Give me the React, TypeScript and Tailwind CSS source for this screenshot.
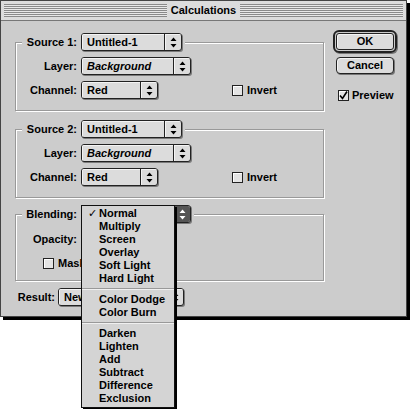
import React from "react";

function Arrows({ light }: { light?: boolean }) {
  return (
    <svg width="7" height="11" viewBox="0 0 7 11">
      <path d="M3.5 0.5 L6.5 4 H0.5 Z M0.5 7 H6.5 L3.5 10.5 Z" fill={light ? "#fff" : "#000"} />
    </svg>
  );
}

function Select({ value, className, italic, pressed }: { value: string; className: string; italic?: boolean; pressed?: boolean }) {
  return (
    <div className={`flex h-[18px] shrink-0 rounded-[3px] border border-[#222] bg-[#dcdcdc] shadow-[1px_1px_0_#7a7a7a] overflow-hidden ${className}`}>
      <div className={`flex-1 pl-[5px] leading-[16px] whitespace-nowrap overflow-hidden shadow-[inset_1px_1px_0_#f4f4f4] ${italic ? "italic" : ""}`}>
        {value}
      </div>
      <div className={`w-[17px] flex items-center justify-center border-l border-[#222] ${pressed ? "bg-[#555]" : "shadow-[inset_1px_1px_0_#f4f4f4]"}`}>
        <Arrows light={pressed} />
      </div>
    </div>
  );
}

function Checkbox({ checked }: { checked?: boolean }) {
  return (
    <div className="w-[11px] h-[11px] shrink-0 border border-[#222] bg-[#e4e4e4] shadow-[inset_1px_1px_0_#fff] flex items-center justify-center">
      {checked && (
        <svg width="9" height="9" viewBox="0 0 9 9">
          <path d="M1 4.5 L3.5 7.5 L8 0.5" stroke="#000" strokeWidth="1.6" fill="none" />
        </svg>
      )}
    </div>
  );
}

function Stripes() {
  return <div className="flex-1 h-[13px] bg-[image:repeating-linear-gradient(to_bottom,#8a8a8a_0px,#8a8a8a_1px,#e8e8e8_1px,#e8e8e8_2px)]" />;
}

const blendModes = [
  ["Normal", "Multiply", "Screen", "Overlay", "Soft Light", "Hard Light"],
  ["Color Dodge", "Color Burn"],
  ["Darken", "Lighten", "Add", "Subtract", "Difference", "Exclusion"],
];

export default function App() {
  return (
    <div className="relative w-[410px] h-[409px] bg-white font-['Liberation_Sans',Arial,sans-serif] text-[11px] font-bold text-black">
      <div className="w-[407px] h-[317px] border border-[#444] shadow-[3px_3px_0_#000] bg-[#cccccc] flex flex-col">
        {/* title bar */}
        <div className="flex items-center h-[20px] px-[3px] border-b border-[#777] bg-[#dcdcdc]">
          <Stripes />
          <div className="px-[4px] text-[11px] leading-none">Calculations</div>
          <Stripes />
        </div>

        <div className="flex pl-[14px]">
          {/* left column */}
          <div className="w-[309px] flex flex-col">
            {/* Source 1 */}
            <div className="mt-[21px] border border-[#999] shadow-[inset_1px_1px_0_#fff,1px_1px_0_#fff] pb-[11px] flex flex-col">
              <div className="-mt-[10px] ml-[6px] self-start flex items-center bg-[#cccccc] pr-[3px]">
                <div className="w-[55px] text-right">Source 1:</div>
                <Select value="Untitled-1" className="ml-[4px] w-[101px]" />
              </div>
              <div className="mt-[6px] flex items-center">
                <div className="w-[61px] text-right">Layer:</div>
                <Select value="Background" italic className="ml-[4px] w-[110px]" />
              </div>
              <div className="mt-[6px] flex items-center">
                <div className="w-[61px] text-right">Channel:</div>
                <Select value="Red" className="ml-[4px] w-[77px]" />
                <div className="ml-[74px] flex items-center gap-[4px]">
                  <Checkbox />
                  <span>Invert</span>
                </div>
              </div>
            </div>

            {/* Source 2 */}
            <div className="mt-[18px] border border-[#999] shadow-[inset_1px_1px_0_#fff,1px_1px_0_#fff] pb-[11px] flex flex-col">
              <div className="-mt-[10px] ml-[6px] self-start flex items-center bg-[#cccccc] pr-[3px]">
                <div className="w-[55px] text-right">Source 2:</div>
                <Select value="Untitled-1" className="ml-[4px] w-[101px]" />
              </div>
              <div className="mt-[6px] flex items-center">
                <div className="w-[61px] text-right">Layer:</div>
                <Select value="Background" italic className="ml-[4px] w-[110px]" />
              </div>
              <div className="mt-[6px] flex items-center">
                <div className="w-[61px] text-right">Channel:</div>
                <Select value="Red" className="ml-[4px] w-[77px]" />
                <div className="ml-[74px] flex items-center gap-[4px]">
                  <Checkbox />
                  <span>Invert</span>
                </div>
              </div>
            </div>

            {/* Blending */}
            <div className="mt-[16px] border border-[#999] shadow-[inset_1px_1px_0_#fff,1px_1px_0_#fff] pb-[11px] flex flex-col">
              <div className="-mt-[10px] ml-[6px] self-start flex items-center bg-[#cccccc] pr-[3px]">
                <div className="w-[55px] text-right">Blending:</div>
                {/* value hidden under the open popup */}
                <Select value="" pressed className="ml-[4px] w-[110px]" />
              </div>
              <div className="mt-[7px] flex items-center h-[18px]">
                <div className="w-[61px] text-right">Opacity:</div>
                <div className="ml-[4px] w-[40px] h-[18px] border border-[#222] bg-white" />
              </div>
              <div className="mt-[9px] ml-[27px] flex items-center gap-[4px] h-[12px]">
                <Checkbox />
                <span className="w-[24px] overflow-hidden whitespace-nowrap">Mask</span>
              </div>
            </div>

            {/* Result */}
            <div className="mt-[7px] flex items-center">
              <div className="w-[40px] text-right">Result:</div>
              <Select value="New" className="ml-[3px] w-[126px]" />
            </div>
          </div>

          {/* right column */}
          <div className="ml-[9px] mt-[9px] w-[64px] flex flex-col items-center">
            <div className="w-[64px] h-[23px] rounded-[6px] border-2 border-[#222] p-[1px] shadow-[1px_1px_0_#777]">
              <div className="h-full rounded-[3px] border border-[#222] bg-[#dcdcdc] shadow-[inset_1px_1px_0_#f4f4f4] flex items-center justify-center">OK</div>
            </div>
            <div className="mt-[4px] w-[58px] h-[17px] rounded-[4px] border border-[#222] bg-[#dcdcdc] shadow-[inset_1px_1px_0_#f4f4f4,1px_1px_0_#777] flex items-center justify-center">
              Cancel
            </div>
            <div className="mt-[13px] self-start ml-[5px] flex items-center gap-[3px]">
              <Checkbox checked />
              <span>Preview</span>
            </div>
          </div>
        </div>
      </div>

      {/* blend mode popup */}
      <div className="absolute left-[81px] top-[205px] w-[94px] border border-[#111] bg-[#d4d4d4] shadow-[2px_2px_0_#000] pt-[1px] pb-[2px]">
        {blendModes.map((group, gi) => (
          <div key={gi}>
            {gi > 0 && (
              <div className="h-[8px] flex items-center">
                <div className="w-full h-[2px] border-t border-[#999] border-b border-b-[#f0f0f0]" />
              </div>
            )}
            {group.map((item) => (
              <div key={item} className="relative h-[13px] leading-[13px] pl-[17px] whitespace-nowrap">
                {item === "Normal" && <span className="absolute left-[6px] font-normal">✓</span>}
                {item}
              </div>
            ))}
          </div>
        ))}
      </div>
    </div>
  );
}
